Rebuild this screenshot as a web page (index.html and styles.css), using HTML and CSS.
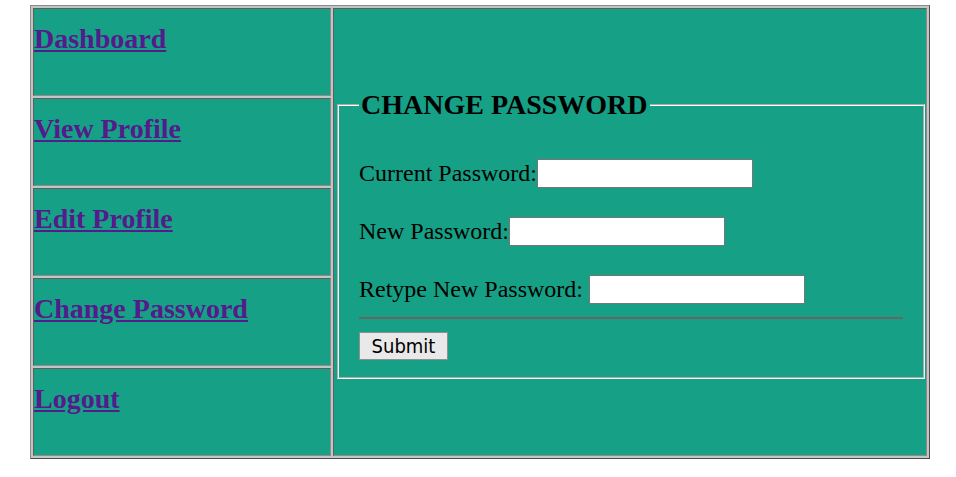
FILE: index.html
```html
<!DOCTYPE html>
<html>
<head>
<meta charset="utf-8">
<title>Change Password</title>
<link rel="stylesheet" href="styles.css">
</head>
<body>
<table class="layout">
  <tr>
    <td class="nav"><h3 class="nav-title"><a href="#" class="nav-link">Dashboard</a></h3></td>
    <td class="main" rowspan="5">
      <form class="pw-form">
        <fieldset class="pw-set">
          <legend class="pw-legend">CHANGE PASSWORD</legend>
          <br>
          Current Password:<input class="pw-input" type="password"><br><br>
          New Password:<input class="pw-input" type="password"><br><br>
          Retype New Password: <input class="pw-input" type="password">
          <hr class="pw-rule">
          <input class="pw-submit" type="submit" value="Submit">
        </fieldset>
      </form>
    </td>
  </tr>
  <tr><td class="nav"><h3 class="nav-title"><a href="#" class="nav-link">View Profile</a></h3></td></tr>
  <tr><td class="nav"><h3 class="nav-title"><a href="#" class="nav-link">Edit Profile</a></h3></td></tr>
  <tr><td class="nav"><h3 class="nav-title"><a href="#" class="nav-link">Change Password</a></h3></td></tr>
  <tr><td class="nav"><h3 class="nav-title"><a href="#" class="nav-link">Logout</a></h3></td></tr>
</table>
</body>
</html>
```

FILE: styles.css
```css
html, body {
  background: #ffffff;
}
body {
  margin: 5px 26px 0 30px;
  font-family: "Liberation Serif", "Times New Roman", serif;
  font-size: 24px;
  color: #000;
}
.layout {
  width: 900px;
  table-layout: fixed;
  border: 1px solid;
  border-color: #8a8a8a #4c4c4c #4c4c4c #8a8a8a;
  border-spacing: 2px;
  border-collapse: separate;
  background: #c4c4c4;
}
.layout td {
  background: #16a085;
  border: 1px solid;
  border-color: #5e5e5e #8c8c8c #8c8c8c #5e5e5e;
  padding: 1px;
  box-sizing: border-box;
}
.nav {
  width: 298px;
  height: 88px;
  vertical-align: top;
}
.layout td.nav {
  padding-left: 0;
}
.main {
  vertical-align: middle;
}
.nav-title {
  margin: 13px 0 0;
  font-size: 28px;
  font-weight: bold;
  line-height: normal;
}
.nav-link {
  color: #551a8b;
  text-decoration: underline;
}
.pw-form {
  margin: 0;
}
.pw-set {
  margin: 4px 0 0 2px;
  padding: 9.4px 20px 17px;
  border: 2px groove #ffffff;
  min-width: 0;
  line-height: 28.5px;
}
.pw-legend {
  padding: 0 2px;
  font-size: 28px;
  font-weight: bold;
  line-height: normal;
}
.pw-input {
  width: 216px;
  height: 29px;
  box-sizing: border-box;
  margin: 0;
  padding: 1px 2px;
  border: 1px solid #767676;
  background: #fff;
  font-family: "DejaVu Sans", sans-serif;
  font-size: 20px;
  line-height: normal;
  vertical-align: baseline;
}
.pw-rule {
  margin: 12.5px 0 12px;
  border: 1px solid #666666;
  height: 0;
}
.pw-submit {
  margin: 0;
  width: 89px;
  height: 28px;
  box-sizing: border-box;
  padding: 0;
  border: 1px solid #8f8f8f;
  background: #e9e9e9;
  color: #000;
  font-family: "DejaVu Sans Condensed", "Liberation Sans", sans-serif;
  font-size: 20px;
  line-height: normal;
  border-radius: 0;
}
```
